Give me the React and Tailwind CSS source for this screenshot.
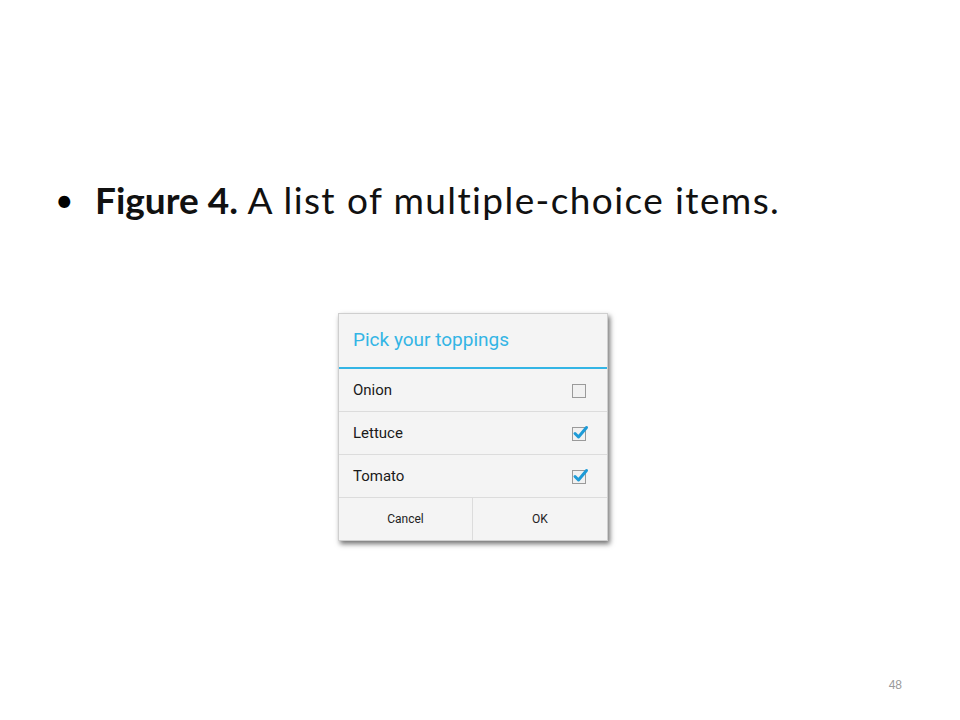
import React from 'react';

const items = [
  { label: 'Onion', checked: false },
  { label: 'Lettuce', checked: true },
  { label: 'Tomato', checked: true },
];

function Check({ checked }) {
  return (
    <svg width="18" height="18" viewBox="0 0 18 18">
      <rect x="1.5" y="3.5" width="13" height="13" fill="#f1f1f1" stroke="#9a9a9a" strokeWidth="1" />
      {checked && (
        <path d="M4 9.5 L7.5 13 L15.5 3.5" fill="none" stroke="#1e9bd7" strokeWidth="3" strokeLinecap="round" strokeLinejoin="round" />
      )}
    </svg>
  );
}

export default function App() {
  return (
    <div className="w-[960px] h-[720px] bg-white flex flex-col font-['Lato',sans-serif] text-black">
      <div className="pt-[179px] pl-[55px] flex items-center">
        <span className="text-[32px] leading-none w-[40px]">•</span>
        <p className="text-[37px] leading-[41px] text-[#111]">
          <span className="font-bold">Figure 4.</span>{' '}
          <span className="tracking-[1.4px]">A list of multiple-choice items.</span>
        </p>
      </div>

      <div className="mt-[93px] ml-[338px] w-[270px] bg-[#f4f4f4] border border-[#cfcfcf] shadow-[2px_3px_5px_rgba(0,0,0,0.55)] font-['Roboto',sans-serif]">
        <div className="h-[55px] flex items-center pl-[14px] border-b-2 border-[#33b5e5]">
          <span className="text-[19px] text-[#33b5e5]">Pick your toppings</span>
        </div>
        {items.map((it) => (
          <div key={it.label} className="h-[43px] flex items-center justify-between pl-[14px] pr-[18px] border-b border-[#dcdcdc]">
            <span className="text-[15px] text-[#1a1a1a]">{it.label}</span>
            <Check checked={it.checked} />
          </div>
        ))}
        <div className="h-[42px] grid grid-cols-2 text-[12px] text-[#222]">
          <div className="flex items-center justify-center border-r border-[#dcdcdc]">Cancel</div>
          <div className="flex items-center justify-center">OK</div>
        </div>
      </div>

      <div className="mt-auto mb-[26px] pr-[58px] flex justify-end">
        <span className="text-[12px] text-[#9a9a9a] font-['Liberation_Sans',sans-serif]">48</span>
      </div>
    </div>
  );
}
